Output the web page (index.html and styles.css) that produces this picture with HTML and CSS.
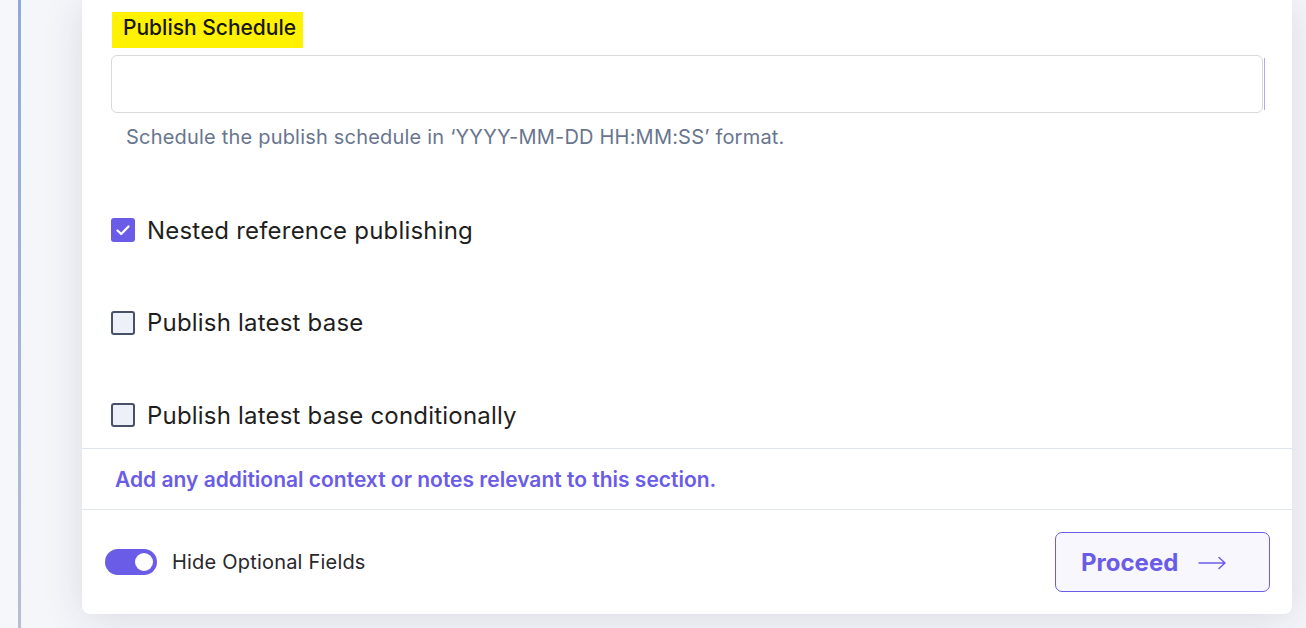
FILE: index.html
```html
<!DOCTYPE html>
<html lang="en">
<head>
<meta charset="utf-8">
<title>Publish Schedule</title>
<link rel="stylesheet" href="styles.css">
</head>
<body>
<div class="page">
  <div class="rail"></div>
  <div class="divider"></div>
  <main class="main">
    <section class="card">
      <div class="body">
        <div class="field">
          <span class="label-hl">Publish Schedule</span>
          <div class="input"></div>
          <p class="help">Schedule the publish schedule in ‘YYYY-MM-DD HH:MM:SS’ format.</p>
        </div>
        <div class="checks">
          <label class="check">
            <span class="box checked">
              <svg viewBox="0 0 24 24" width="24" height="24"><polyline points="6.5,12.5 10.2,16 17.5,8.5" fill="none" stroke="#fff" stroke-width="2.3" stroke-linecap="round" stroke-linejoin="round"/></svg>
            </span>
            <span class="check-text">Nested reference publishing</span>
          </label>
          <label class="check">
            <span class="box"></span>
            <span class="check-text">Publish latest base</span>
          </label>
          <label class="check">
            <span class="box"></span>
            <span class="check-text">Publish latest base conditionally</span>
          </label>
        </div>
      </div>
      <div class="notes">Add any additional context or notes relevant to this section.</div>
      <footer class="footer">
        <div class="toggle-wrap">
          <span class="toggle"><span class="knob"></span></span>
          <span class="toggle-text">Hide Optional Fields</span>
        </div>
        <button class="proceed" type="button">
          <span>Proceed</span>
          <svg viewBox="0 0 28 14" width="28" height="14"><path d="M1 7H27M21 1.5L27 7L21 12.5" fill="none" stroke="#6b5ce7" stroke-width="1.5" stroke-linecap="round" stroke-linejoin="round"/></svg>
        </button>
      </footer>
    </section>
  </main>
</div>
</body>
</html>
```

FILE: styles.css
```css
* { box-sizing: border-box; }
html, body { margin: 0; height: 100%; }
body {
  font-family: Inter, "Noto Sans", "Liberation Sans", sans-serif;
  background: #f5f7fb;
  overflow: hidden;
}
.page {
  display: flex;
  height: 628px;
}
.rail {
  width: 18px;
  flex: none;
  background: #f5f7fb;
}
.divider {
  width: 3px;
  flex: none;
  background: linear-gradient(180deg, #8ea9dc 0%, #a3b2d8 50%, #b9bdd4 100%);
}
.main {
  flex: 1;
  padding: 0 14px 14px 61px;
  background: #f5f6fa;
  display: flex;
  flex-direction: column;
}
.card {
  flex: 1;
  background: #fff;
  border-radius: 0 0 8px 8px;
  box-shadow: 0 4px 40px rgba(30, 40, 80, 0.13);
  display: flex;
  flex-direction: column;
}
.body {
  padding: 12px 29px 0 29px;
  flex: 1;
}
.label-hl {
  display: inline-block;
  margin-left: 1px;
  height: 36px;
  line-height: 32px;
  padding: 0 7px 4px 11px;
  background: #fff200;
  color: #161616;
  font-size: 21px;
  font-weight: 500;
}
.input {
  position: relative;
  margin-top: 7px;
  height: 58px;
  border: 1px solid #d9d9dc;
  border-radius: 6px;
  background: #fff;
}
.input::after {
  content: "";
  position: absolute;
  right: -3px;
  top: 2px;
  bottom: 2px;
  width: 1.5px;
  background: #b0a8f0;
}
.help {
  margin: 11px 0 0 15px;
  font-size: 20px;
  letter-spacing: 0.2px;
  line-height: 26px;
  color: #68758f;
}
.checks {
  margin-top: 64px;
  display: flex;
  flex-direction: column;
  gap: 60.5px;
}
.check {
  display: flex;
  align-items: center;
  gap: 12px;
  height: 32px;
}
.box {
  width: 24px;
  height: 24px;
  flex: none;
  border: 2px solid #475065;
  border-radius: 3px;
  background: #edf0f8;
  display: flex;
}
.box.checked {
  border: none;
  background: #6b5ce7;
}
.check-text {
  font-size: 24px;
  letter-spacing: 0.2px;
  color: #1f1f22;
}
.notes {
  margin-top: 15px;
  border-top: 1px solid #dfe4ef;
  height: 61px;
  padding-left: 33px;
  display: flex;
  align-items: center;
  font-size: 21px;
  font-weight: 600;
  color: #6b5ce7;
}
.footer {
  border-top: 1px solid #dfe4ef;
  height: 105px;
  padding: 0 22px 0 23px;
  display: flex;
  align-items: center;
  justify-content: space-between;
}
.toggle-wrap {
  display: flex;
  align-items: center;
  gap: 15px;
}
.toggle {
  width: 52px;
  height: 26px;
  border-radius: 13px;
  background: #6b5ce7;
  display: flex;
  align-items: center;
  justify-content: flex-end;
  padding-right: 4px;
}
.knob {
  width: 18px;
  height: 18px;
  border-radius: 50%;
  background: #fff;
}
.toggle-text {
  font-size: 20px;
  letter-spacing: 0.2px;
  color: #28282b;
}
.proceed {
  width: 215px;
  height: 60px;
  border: 1px solid #6b5ce7;
  border-radius: 7px;
  background: #f8f7fe;
  display: flex;
  align-items: center;
  gap: 20px;
  padding: 0 0 0 25px;
  font-family: inherit;
  font-size: 24px;
  font-weight: 700;
  color: #6b5ce7;
  cursor: pointer;
}
.proceed svg { margin-top: 1px; }
```
